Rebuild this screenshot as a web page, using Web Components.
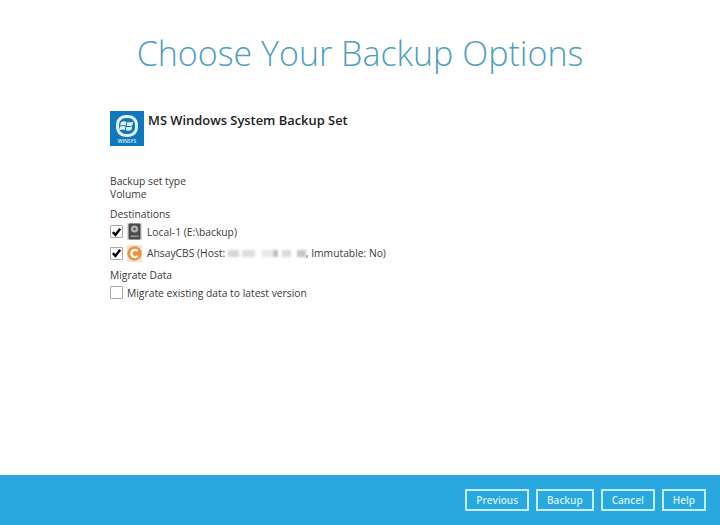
<!DOCTYPE html>
<html>
<head>
<meta charset="utf-8">
<title>Choose Your Backup Options</title>
<style>
    html, body { margin: 0; height: 100%; }
    body { font-family: "Open Sans", "Liberation Sans", sans-serif; color: #3a3a3a; background: #fff; }
</style>
</head>
<body>
<backup-page>
    <span slot="title">Choose Your Backup Options</span>
    <backup-header name="MS Windows System Backup Set"></backup-header>
    <info-block label="Backup set type">Volume</info-block>
    <section-label>Destinations</section-label>
    <option-row checked icon="disk">Local-1 (E:\backup)</option-row>
    <option-row checked icon="cbs">AhsayCBS (Host: <masked-host></masked-host>, Immutable: No)</option-row>
    <section-label>Migrate Data</section-label>
    <option-row>Migrate existing data to latest version</option-row>
    <footer-button slot="footer">Previous</footer-button>
    <footer-button slot="footer">Backup</footer-button>
    <footer-button slot="footer">Cancel</footer-button>
    <footer-button slot="footer">Help</footer-button>
</backup-page>
<script>
class BackupPage extends HTMLElement {
    connectedCallback() {
        const shadow = this.attachShadow({mode: 'open'});
        shadow.innerHTML = `
            <style>
                :host {
                    display: flex;
                    flex-direction: column;
                    width: 720px;
                    height: 525px;
                    overflow: hidden;
                }
                h1 {
                    margin: 0;
                    padding-top: 30px;
                    height: 79px;
                    box-sizing: border-box;
                    text-align: center;
                    font-size: 34px;
                    line-height: 46px;
                    font-weight: 300;
                    color: #4f9fbd;
                }
                main {
                    flex: 1;
                    padding: 32px 0 0 110px;
                }
                footer {
                    display: flex;
                    justify-content: flex-end;
                    align-items: center;
                    gap: 7px;
                    height: 50px;
                    padding: 0 14px 0 0;
                    box-sizing: border-box;
                    background: #29a8e0;
                }
            </style>
            <h1><slot name="title"></slot></h1>
            <main><slot></slot></main>
            <footer><slot name="footer"></slot></footer>`;
    }
}

class BackupHeader extends HTMLElement {
    connectedCallback() {
        const shadow = this.attachShadow({mode: 'open'});
        shadow.innerHTML = `
            <style>
                :host {
                    display: flex;
                    gap: 4px;
                    height: 35px;
                    margin-bottom: 29px;
                }
                svg { display: block; }
                p {
                    margin: -1px 0 0;
                    font-size: 12.9px;
                    line-height: 20px;
                    font-weight: 600;
                    color: #222;
                }
                text {
                    font-family: "Open Sans", sans-serif;
                    font-size: 5px;
                    font-weight: 600;
                    fill: #dff1fb;
                }
            </style>
            <svg width="34" height="35" viewBox="0 0 34 35">
                <rect width="34" height="35" fill="#0f78bd"/>
                <rect x="7.5" y="5.5" width="19" height="19" rx="8" fill="none" stroke="#e3f2fb" stroke-width="3"/>
                <path d="M11 11 Q13.5 9.8 16.4 10.8 L15.7 14.4 Q13 13.4 10.2 14.6Z M17.4 11 Q20 12 23.2 10.4 L22.4 14.2 Q19.4 15.6 16.7 14.7Z M10 15.6 Q13 14.4 15.5 15.4 L14.8 19 Q12.2 18 9.2 19.2Z M16.5 15.7 Q19.2 16.6 22.2 15.2 L21.4 19 Q18.6 20.2 15.8 19.3Z" fill="#e3f2fb"/>
                <text x="17" y="32" text-anchor="middle">WINSYS</text>
            </svg>
            <p>${this.getAttribute('name')}</p>`;
    }
}

class InfoBlock extends HTMLElement {
    connectedCallback() {
        const shadow = this.attachShadow({mode: 'open'});
        shadow.innerHTML = `
            <style>
                :host {
                    display: block;
                    font-size: 10.3px;
                    line-height: 13px;
                }
            </style>
            <div>${this.getAttribute('label')}</div>
            <div><slot></slot></div>`;
    }
}

class SectionLabel extends HTMLElement {
    connectedCallback() {
        const shadow = this.attachShadow({mode: 'open'});
        shadow.innerHTML = `
            <style>
                :host {
                    display: block;
                    font-size: 10.3px;
                    line-height: 14px;
                    margin: 5.5px 0 2px;
                }
            </style>
            <slot></slot>`;
    }
}

const OPTION_ICONS = {
    disk: `<svg width="15" height="17" viewBox="0 0 15 17">
        <rect width="15" height="17" fill="#ddd"/>
        <rect x="1.5" y="0.5" width="12" height="16" rx="1" fill="#4b4b4b"/>
        <circle cx="7.5" cy="6" r="3.6" fill="#b5b5b5"/>
        <circle cx="7.5" cy="6" r="1.2" fill="#4b4b4b"/>
        <rect x="3.5" y="12.5" width="8" height="1.5" fill="#9a9a9a"/>
    </svg>`,
    cbs: `<svg width="15" height="17" viewBox="0 0 15 17">
        <rect width="15" height="17" fill="#f6e1cf"/>
        <circle cx="7.5" cy="8.5" r="7.2" fill="#ec9340"/>
        <path d="M10.6 6 A3.6 3.6 0 1 0 10.6 11" fill="none" stroke="#fff" stroke-width="2.4"/>
    </svg>`
};

class OptionRow extends HTMLElement {
    connectedCallback() {
        const shadow = this.attachShadow({mode: 'open'});
        const icon = OPTION_ICONS[this.getAttribute('icon')] || '';
        const tick = this.hasAttribute('checked')
            ? `<svg width="12" height="12" viewBox="0 0 12 12"><path d="M2 6.2 L4.8 9.2 L10 2.4" fill="none" stroke="#000" stroke-width="2.6"/></svg>`
            : '';
        shadow.innerHTML = `
            <style>
                :host {
                    display: flex;
                    align-items: center;
                    gap: 4px;
                    height: 18px;
                    margin-bottom: 3.5px;
                    font-size: 10.3px;
                    color: #3a3a3a;
                }
                .box {
                    display: flex;
                    align-items: center;
                    justify-content: center;
                    flex: none;
                    width: 11px;
                    height: 11px;
                    border: 1px solid #a8a8a8;
                    border-radius: 1px;
                    background: #fff;
                }
                .icon { display: flex; flex: none; margin-right: 1px; }
                .text { display: flex; align-items: center; white-space: pre; }
            </style>
            <span class="box">${tick}</span>
            ${icon ? `<span class="icon">${icon}</span>` : ''}
            <span class="text"><slot></slot></span>`;
    }
}

class MaskedHost extends HTMLElement {
    connectedCallback() {
        const shadow = this.attachShadow({mode: 'open'});
        shadow.innerHTML = `
            <style>
                :host {
                    display: inline-flex;
                    align-items: center;
                    width: 78px;
                    height: 8px;
                    vertical-align: -1px;
                }
                i { display: block; height: 7px; background: #d6d6d6; filter: blur(0.8px); }
            </style>
            <i style="width:11px;margin-right:3px"></i>
            <i style="width:13px;margin-right:7px;background:#dedede"></i>
            <i style="width:11px;background:#e8e8e8"></i>
            <i style="width:5px;margin-right:4px;background:#bdbdbd"></i>
            <i style="width:9px;margin-right:6px;background:#dadada"></i>
            <i style="width:9px;background:#c6c6c6"></i>`;
    }
}

class FooterButton extends HTMLElement {
    connectedCallback() {
        const shadow = this.attachShadow({mode: 'open'});
        shadow.innerHTML = `
            <style>
                :host {
                    display: block;
                    box-sizing: border-box;
                    height: 22px;
                    padding: 0 9px;
                    border: 2px solid #c5eefb;
                    font-size: 10px;
                    font-weight: 600;
                    line-height: 18px;
                    color: #d5f1fb;
                }
            </style>
            <slot></slot>`;
    }
}

customElements.define('backup-page', BackupPage);
customElements.define('backup-header', BackupHeader);
customElements.define('info-block', InfoBlock);
customElements.define('section-label', SectionLabel);
customElements.define('option-row', OptionRow);
customElements.define('masked-host', MaskedHost);
customElements.define('footer-button', FooterButton);
</script>
</body>
</html>
